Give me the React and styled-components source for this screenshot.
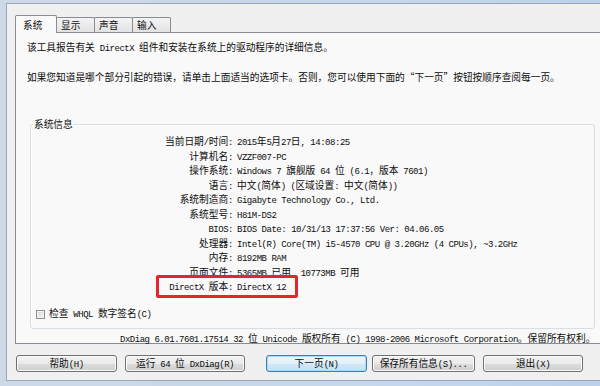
import React from 'react';
import styled, { createGlobalStyle } from 'styled-components';

const Global = createGlobalStyle`
  html, body { margin: 0; padding: 0; }
  body {
    width: 600px; height: 386px; overflow: hidden;
    background: #c9daee;
    font-family: "Noto Sans CJK SC", sans-serif;
    font-size: 9.7px;
    color: #0d0d0d;
  }
`;

const Latin = styled.span`
  font-family: "Liberation Mono", monospace;
  font-size: 9px;
  letter-spacing: -0.48px;
`;

const Quote = styled.span`
  font-feature-settings: "fwid" 1;
`;

/* Splits a string into ASCII and CJK runs so ASCII gets the narrow monospace face. */
function T({ children }) {
  const parts = String(children).split(/([\x20-\x7E]+)/);
  return parts.map((p, i) =>
    p === '' ? null : /^[\x20-\x7E]+$/.test(p) ? <Latin key={i}>{p}</Latin> : <React.Fragment key={i}>{p}</React.Fragment>
  );
}

const Frame = styled.div`
  width: 600px; height: 386px; box-sizing: border-box;
  padding: 3px 7px 5px 6px;
  background: linear-gradient(90deg, #cdd9e6 0%, #c6d8ec 60%, #bcd2ea 100%);
  display: flex;
`;

const Client = styled.div`
  flex: 1;
  background: #f0f0f0;
  border: 1px solid #97a6b8;
  display: flex; flex-direction: column;
  padding: 11px 8px 0 8px;
`;

const TabStrip = styled.div`
  display: flex; align-items: flex-end;
  height: 18px; margin-bottom: -1px;
  position: relative; z-index: 1;
`;

const Tab = styled.div`
  box-sizing: border-box;
  width: ${p => (p.$active ? 42 : 39)}px;
  height: ${p => (p.$active ? 18 : 15)}px;
  margin-left: ${p => (p.$first ? 0 : -1)}px;
  margin-bottom: ${p => (p.$active ? 0 : 1)}px;
  border: 1px solid #898c95;
  border-bottom: none;
  border-radius: 2px 2px 0 0;
  background: ${p => (p.$active ? '#f9f9f9' : 'linear-gradient(#f4f4f4, #e3e3e3)')};
  display: flex; align-items: center;
  padding-left: ${p => (p.$active ? 7 : 4)}px;
  line-height: 12px;
`;

const Panel = styled.div`
  box-sizing: border-box;
  height: 312px;
  border: 1px solid #898c95;
  background: #f9f9f9;
  padding: 7px 8px 0 11px;
  display: flex; flex-direction: column;
`;

const Para = styled.p`
  margin: 0;
  line-height: 14px;
  white-space: nowrap;
  & + & { margin-top: 14px; }
`;

const Group = styled.fieldset`
  margin: 33px 0 0 3px;
  padding: 3px 0 6px 0;
  border: 1px solid #d5dfe5;
  border-radius: 3px;
  min-width: 0;
  box-shadow: inset 1px 1px 0 #fff;
`;

const Legend = styled.legend`
  margin-left: 2px;
  padding: 0 1px;
  line-height: 14px;
`;

const InfoGrid = styled.div`
  position: relative;
  display: grid;
  grid-template-columns: 202px 1fr;
  grid-auto-rows: 14.5px;
  column-gap: 4px;
  line-height: 14.5px;
  white-space: nowrap;
`;

const Label = styled.div`
  text-align: right;
`;

const Value = styled.div`
  overflow-x: clip;
`;

const Highlight = styled.span`
  position: absolute;
  left: 125px; top: 141px;
  width: 142px; height: 23px;
  box-sizing: border-box;
  border: 3px solid #e3262b;
  border-radius: 2px;
  pointer-events: none;
`;

const CheckRow = styled.label`
  display: flex; align-items: center;
  margin-top: 12.5px;
  padding-left: 5px;
  line-height: 14px;
  white-space: pre;
`;

const CheckBox = styled.span`
  box-sizing: border-box;
  width: 9px; height: 9px;
  margin-right: 4px;
  border: 1px solid #8e8f8f;
  background: linear-gradient(135deg, #d6d6d6, #f6f6f6);
  box-shadow: inset 0 0 0 1px #f4f4f4;
`;

const Footer = styled.div`
  margin-top: 2px;
  padding-left: 93px;
  line-height: 14px;
  white-space: nowrap;
  overflow-x: clip;
  overflow-y: visible;
`;

const ButtonRow = styled.div`
  display: flex;
  margin-top: 11px;
  padding-left: 1px;
`;

const Button = styled.button`
  box-sizing: border-box;
  width: ${p => p.$w}px;
  height: 17px;
  margin: 0 0 0 ${p => p.$ml || 0}px;
  padding: 0;
  border: 1px solid ${p => (p.$default ? '#3c7fb1' : '#707070')};
  border-radius: 3px;
  background: ${p => (p.$default
    ? 'linear-gradient(#ecf5fb 0%, #e3f0fa 50%, #d0e8f8 51%, #c4e1f6 100%)'
    : 'linear-gradient(#f2f2f2 0%, #ebebeb 50%, #dddddd 51%, #cfcfcf 100%)')};
  box-shadow: inset 0 0 0 1px ${p => (p.$default ? '#a9dbf6' : '#fbfbfb')};
  font: inherit;
  color: #0d0d0d;
  line-height: 15px;
  white-space: nowrap;
`;

const tabs = ['系统', '显示', '声音', '输入'];

const rows = [
  ['当前日期/时间:', '2015年5月27日, 14:08:25'],
  ['计算机名:', 'VZZF007-PC'],
  ['操作系统:', 'Windows 7 旗舰版 64 位 (6.1，版本 7601)'],
  ['语言:', '中文(简体) (区域设置: 中文(简体))'],
  ['系统制造商:', 'Gigabyte Technology Co., Ltd.'],
  ['系统型号:', 'H81M-DS2'],
  ['BIOS:', 'BIOS Date: 10/31/13 17:37:56 Ver: 04.06.05'],
  ['处理器:', 'Intel(R) Core(TM) i5-4570 CPU @ 3.20GHz (4 CPUs), ~3.2GHz'],
  ['内存:', '8192MB RAM'],
  ['页面文件:', '5365MB 已用, 10773MB 可用'],
  ['DirectX 版本:', 'DirectX 12'],
];

const buttons = [
  { t: '帮助(H)', w: 101, ml: 0 },
  { t: '运行 64 位 DxDiag(R)', w: 120, ml: 8 },
  { t: '下一页(N)', w: 101, ml: 21, d: true },
  { t: '保存所有信息(S)...', w: 103, ml: 5 },
  { t: '退出(X)', w: 100, ml: 8 },
];

export default function App() {
  return (
    <>
      <Global />
      <Frame>
        <Client>
          <TabStrip>
            {tabs.map((t, i) => (
              <Tab key={t} $active={i === 0} $first={i === 0}>{t}</Tab>
            ))}
          </TabStrip>
          <Panel>
            <Para><T>该工具报告有关 DirectX 组件和安装在系统上的驱动程序的详细信息。</T></Para>
            <Para>
              <T>如果您知道是哪个部分引起的错误，请单击上面适当的选项卡。否则，您可以使用下面的</T><Quote>“</Quote>下一页<Quote>”</Quote>按钮按顺序查阅每一页。
            </Para>
            <Group>
              <Legend>系统信息</Legend>
              <InfoGrid>
                {rows.map(([l, v]) => (
                  <React.Fragment key={l}>
                    <Label><T>{l}</T></Label>
                    <Value><T>{v}</T></Value>
                  </React.Fragment>
                ))}
                <Highlight />
              </InfoGrid>
              <CheckRow>
                <CheckBox />
                <span><T>检查 WHQL 数字签名(C)</T></span>
              </CheckRow>
            </Group>
            <Footer><T>DxDiag 6.01.7601.17514 32 位 Unicode 版权所有 (C) 1998-2006 Microsoft Corporation。保留所有权利。</T></Footer>
          </Panel>
          <ButtonRow>
            {buttons.map(b => (
              <Button key={b.t} $w={b.w} $ml={b.ml} $default={b.d}><T>{b.t}</T></Button>
            ))}
          </ButtonRow>
        </Client>
      </Frame>
    </>
  );
}
